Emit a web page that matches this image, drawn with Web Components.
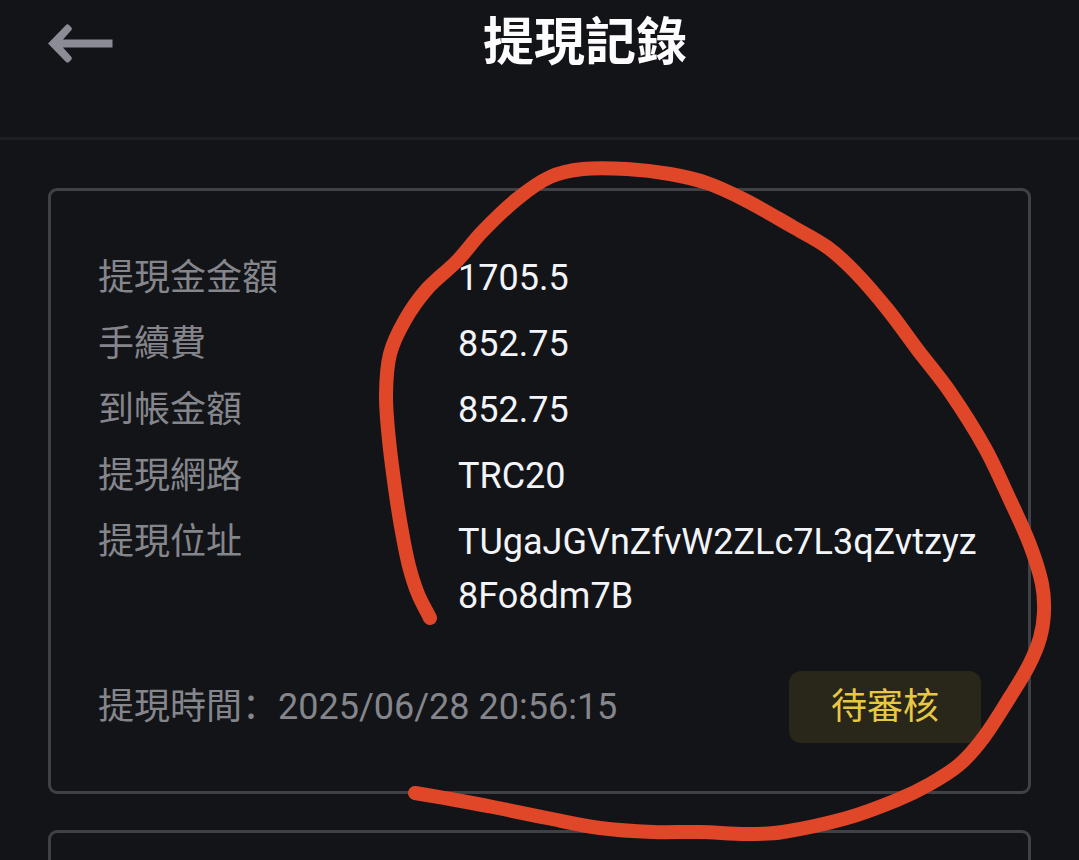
<!DOCTYPE html>
<html lang="zh-Hans">
<head>
<meta charset="utf-8">
<meta name="viewport" content="width=device-width, initial-scale=1">
<title>提現記錄</title>
<style>
  html { background: #131418; }
  body { margin: 0; font-family: Roboto, "Noto Sans CJK SC", sans-serif; }
</style>
</head>
<body>
<records-page>
  <page-header slot="header">提現記錄</page-header>
  <record-card>
    <record-field label="提現金金額">1705.5</record-field>
    <record-field label="手續費">852.75</record-field>
    <record-field label="到帳金額">852.75</record-field>
    <record-field label="提現網路">TRC20</record-field>
    <record-field label="提現位址">TUgaJGVnZfvW2ZLc7L3qZvtzyz8Fo8dm7B</record-field>
    <record-time slot="footer" label="提現時間：">2025/06/28 20:56:15</record-time>
    <status-badge slot="footer">待審核</status-badge>
  </record-card>
  <record-card></record-card>
  <pen-mark slot="overlay"></pen-mark>
</records-page>

<script>
  class BaseElement extends HTMLElement {
    connectedCallback() {
      if (this.shadowRoot) return;
      const template = document.createElement('template');
      template.innerHTML = this.render();
      this.attachShadow({ mode: 'open' }).append(template.content.cloneNode(true));
    }
  }

  class RecordsPage extends BaseElement {
    render() {
      return `
        <style>
          :host {
            display: block; position: relative; height: 100vh; overflow: hidden;
            background: #131418; color: #f3f4f8; font-size: 36px; line-height: 54px;
          }
          main { display: flex; flex-direction: column; gap: 36px; padding: 48px; }
        </style>
        <slot name="header"></slot>
        <main><slot></slot></main>
        <slot name="overlay"></slot>`;
    }
  }

  class PageHeader extends BaseElement {
    render() {
      return `
        <style>
          :host { display: block; border-bottom: 3px solid #1d1e22; }
          header { display: flex; align-items: center; padding: 3px 48px 54px; }
          button {
            display: flex; flex: none; padding: 0 26px 0 0; border: 0;
            background: none; color: #8b8c95; cursor: pointer;
          }
          svg { display: block; }
          h1 {
            flex: 1; margin: 0; text-align: center;
            font-size: 51px; line-height: 80px; font-weight: 700; color: #fcfcff;
          }
        </style>
        <header>
          <button type="button" aria-label="返回">
            <svg width="65" height="40" viewBox="0 0 65 40" aria-hidden="true">
              <path d="M0 20.500 18 2Q19.500 .7 21 2L23.500 4.500Q24.300 6 23.500 7L15 16.500H64.500V24.500H15L23.500 34Q24.300 35.500 23.500 36.500L21 39Q19.500 40 18 39Z" fill="currentColor"/>
            </svg>
          </button>
          <h1><slot></slot></h1>
        </header>`;
    }
  }

  class RecordCard extends BaseElement {
    render() {
      return `
        <style>
          :host {
            display: block; box-sizing: border-box; min-height: 606px;
            padding: 60px 47px 48px; border: 3px solid #404146; border-radius: 9px;
          }
          .fields { display: grid; gap: 12px; }
          footer {
            display: flex; align-items: center; justify-content: space-between;
            margin-top: 48px;
          }
        </style>
        <div class="fields"><slot></slot></div>
        <footer><slot name="footer"></slot></footer>`;
    }
  }

  class RecordField extends BaseElement {
    render() {
      return `
        <style>
          :host { display: block; }
          dl { display: grid; grid-template-columns: 360px minmax(0, 1fr); margin: 0; }
          dt { color: #85868b; }
          dd { margin: 0; overflow-wrap: anywhere; }
        </style>
        <dl><dt>${this.getAttribute('label')}</dt><dd><slot></slot></dd></dl>`;
    }
  }

  class RecordTime extends BaseElement {
    render() {
      return `
        <style>
          :host { display: flex; color: #85868b; }
        </style>
        <span>${this.getAttribute('label')}</span><time><slot></slot></time>`;
    }
  }

  class StatusBadge extends BaseElement {
    render() {
      return `
        <style>
          :host {
            display: block; padding: 9px 42px; border-radius: 12px;
            background: #292719; color: #e8c843;
          }
        </style>
        <slot></slot>`;
    }
  }

  // Freehand marker stroke, smoothed through the sampled pen positions.
  class PenMark extends BaseElement {
    render() {
      const p = [
        [430, 618], [418, 594], [409, 566], [402, 532], [396, 495], [389, 440],
        [386, 395], [390, 354], [405, 320], [427, 289], [457, 261], [482, 232],
        [517, 199], [550, 177], [583, 169], [627, 169], [670, 174], [707, 183],
        [745, 200], [793, 227], [827, 247], [855, 272], [888, 310], [917, 349],
        [950, 392], [985, 448], [1010, 500], [1030, 545], [1042, 584], [1044, 612],
        [1040, 638], [1029, 665], [1010, 697], [984, 737], [960, 764],
        [930, 784], [897, 800], [847, 818], [783, 832], [747, 834], [700, 832], [653, 832],
        [600, 828], [547, 818], [493, 807], [450, 799], [415, 793]
      ];
      let d = `M${p[0]}`;
      for (let i = 0; i < p.length - 1; i++) {
        const a = p[i - 1] || p[i], b = p[i], c = p[i + 1], e = p[i + 2] || c;
        // Scale each tangent to its own segment so uneven spacing leaves no bumps.
        const seg = Math.hypot(c[0] - b[0], c[1] - b[1]);
        const t1 = Math.hypot(c[0] - a[0], c[1] - a[1]);
        const t2 = Math.hypot(e[0] - b[0], e[1] - b[1]);
        const k1 = seg / t1 / 3, k2 = seg / t2 / 3;
        d += `C${b[0] + (c[0] - a[0]) * k1} ${b[1] + (c[1] - a[1]) * k1} ` +
             `${c[0] - (e[0] - b[0]) * k2} ${c[1] - (e[1] - b[1]) * k2} ${c}`;
      }
      return `
        <style>
          :host { display: block; position: absolute; inset: 0; pointer-events: none; }
          svg { display: block; width: 100%; }
        </style>
        <svg viewBox="0 0 1079 860" aria-hidden="true">
          <path d="${d}" fill="none" stroke="#e04628" stroke-width="14"
                stroke-linecap="round" stroke-linejoin="round"/>
        </svg>`;
    }
  }

  customElements.define('records-page', RecordsPage);
  customElements.define('page-header', PageHeader);
  customElements.define('record-card', RecordCard);
  customElements.define('record-field', RecordField);
  customElements.define('record-time', RecordTime);
  customElements.define('status-badge', StatusBadge);
  customElements.define('pen-mark', PenMark);
</script>
</body>
</html>
